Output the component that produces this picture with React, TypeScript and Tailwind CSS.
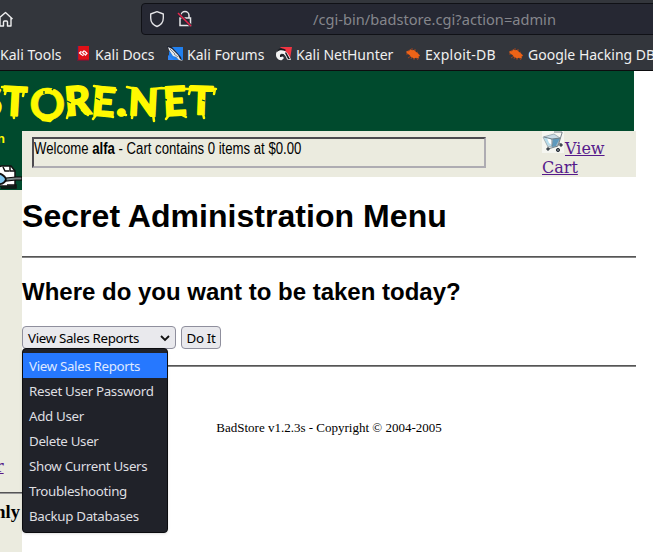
import React from 'react';

const ui = "font-['Noto_Sans',sans-serif]";

function Beetle() {
  return (
    <svg width="16" height="16" viewBox="0 0 16 16" className="shrink-0" fill="none" stroke="#b64416" strokeWidth=".8">
      <path d="M3 4l2 3M1 8h4M3 12l3-2M6 13l1-3M9 14v-3M13 14l-2-3M7 2v3M10 3v3M13 6l-2 1M15 9l-3 1" />
      <path d="M1.500 5 4 5.300 5 3.300l2 1 2-.3 2 2 2.200 1.500L15 10l-1.500.5.5 2-3-.7-2 .7-3-1.800-2-2.200L1.500 7z" fill="#ee6317" stroke="none" />
    </svg>
  );
}

function DocsIcon() {
  return (
    <svg width="14" height="16" viewBox="0 0 14 16" className="shrink-0">
      <path d="M1 0h12v14H1z" fill="#df1017" />
      <path d="M1 0h1.200v15H1z" fill="#342f60" />
      <path d="M1 13.700h12V15H1z" fill="#6b1d35" />
      <path d="M5.400 5.300 3.500 7l2.500 2M8.700 5.200 11 7.200 9 9.500M8.500 4.500 6.300 6.500l2 1.500-2 1.700" fill="none" stroke="#fff" strokeWidth="1.200" />
    </svg>
  );
}

function ForumsIcon() {
  return (
    <svg width="17" height="16" viewBox="0 0 17 16" className="shrink-0">
      <path d="M2 1h14v13H2z" fill="#2080ef" />
      <path d="M0 0h4l10 11 1 4-4-2L2 5z" fill="#202634" />
      <path d="m1 1 4 2 6 6 2 4 3 2-4-1-3-3-3-1L2 4z" fill="#e6e9ec" />
      <path d="m3 3 5 5M7 8l4 3" stroke="#627080" strokeWidth=".8" />
      <path d="M1 9v5h6z" fill="#3385f5" />
    </svg>
  );
}

function HunterIcon() {
  return (
    <svg width="16" height="16" viewBox="0 0 16 16" className="shrink-0">
      <path d="M4 1h12l-2 12-6-8z" fill="#f23442" />
      <path d="M0 9c0-6 6-7 9-4 3 2 5 6 6 9l-4-.5C10 10 8 7 5 8c-2 1-1 3 1 2l2 2-2 2C3 15 0 12 0 9z" fill="#f3f3f3" />
      <path d="M1 5c2-4 6-3 9-1L9 5C6 4 3 4 1 6zM10 6l4 7h-2L9 7zM4 9l4-1-1 2-2 1H4z" fill="#181b20" />
    </svg>
  );
}

function Logo() {
  return (
    <svg width="222" height="60" viewBox="0 0 222 60" className="block">
      <g fill="#fff900" stroke="#fff900" strokeLinejoin="round" fontFamily="Lato, sans-serif" fontWeight="900">
        <text strokeWidth="1.700" fontSize="40">
          <tspan x="-20" y="45">S</tspan>
          <tspan x="2" y="44" rotate="3">T</tspan>
          <tspan x="29.500" y="48.500" fontSize="44" strokeWidth=".5">O</tspan>
          <tspan x="66" y="45" rotate="-5" fontSize="40">R</tspan>
          <tspan x="91" y="44" rotate="5" fontSize="40">E</tspan>
          <tspan x="116" y="45" fontSize="44">.</tspan>
          <tspan x="128" y="44" rotate="3" fontSize="38">N</tspan>
          <tspan x="164" y="45" rotate="-3" fontSize="40">E</tspan>
          <tspan x="189" y="43" rotate="2" fontSize="39">T</tspan>
        </text>
        <g fill="none" strokeWidth="2.500" strokeLinecap="round">
          <path d="M2 16l24 2M6 19l-1 4M24 20l-1 5M13 40l1 7M37 43l6 6 7 1 4-4M69 40l-2 7M82 39l6 5M96 44l-3 4M109 43l4 3M122 43l4 1M133 40l-1 7M152 36l2 14M169 44l-3 4M182 44l4 2M202 38l2 9M190 19l-1 4M215 18l-1 5M94 15l22 4M162 17l27 1M190 16l26 2M127 16l9 2M153 18l9-1" />
        </g>
      </g>
      <path d="M32 14l3 3M55 15l-3 4M67 30l4 2M96 27l4 2M163 28l4 1M202 29l3 1M44 20v3M109 36l1 2" fill="none" stroke="#004a2d" strokeWidth="1.300" />
    </svg>
  );
}

function CartIcon() {
  return (
    <svg width="23" height="22" viewBox="0 0 23 22">
      <path d="M0 0h22v22H0z" fill="#f5f6f1" />
      <path d="m1 6 11-3 6 4-3 8-9 1z" fill="#c9dce6" stroke="#8798a1" strokeWidth=".7" />
      <path d="m2 7 8 1v7l-4-1z" fill="#b5ddec" />
      <path d="m11 8 7-1-4 8-4 1z" fill="#5e9abd" />
      <path d="m5 7 5 2v5l-3-2z" fill="#fff" />
      <path d="M2 6l8 2 8-1M10 8v7M12 1h8v1l-4 13-10 3M17 12l3 2" fill="none" stroke="#66757e" strokeWidth=".9" />
      <g fill="#6d767d" stroke="#293139">
        <circle cx="6" cy="18" r="1.200" /><circle cx="16" cy="19" r="1.600" /><circle cx="19" cy="14" r="1.200" />
      </g>
    </svg>
  );
}

const options = ['View Sales Reports', 'Reset User Password', 'Add User', 'Delete User', 'Show Current Users', 'Troubleshooting', 'Backup Databases'];

export default function App() {
  return (
    <div className="h-[552px] w-[653px] overflow-hidden bg-white text-black">
      <div className={`${ui} h-[71px] border-b border-[#0c0d0f] bg-[#33363c]`}>
        <div className="flex h-10 items-start pt-[3px]">
          <svg width="14" height="18" viewBox="0 0 14 18" className="mt-[7px] shrink-0" fill="none" stroke="#eeeeef" strokeWidth="1.400" strokeLinejoin="round">
            <path d="M-2 9 5.500 2.500 12.500 9M0 8v8h3.500v-4q0-1 1-1h2q1 0 1 1v4H11V8" />
          </svg>
          <div className="ml-[127px] flex h-8 w-[520px] shrink-0 items-center rounded-[4px] border border-[#101116] bg-[#262833]">
            <svg width="16" height="18" viewBox="0 0 16 18" className="ml-[7px] shrink-0" fill="none" stroke="#e5e5e8" strokeWidth="1.350" strokeLinejoin="round">
              <path d="M8 1.700 14.300 4v4c0 4-2.500 7-6.300 8.500C4.200 15 1.700 12 1.700 8V4z" />
            </svg>
            <svg width="16" height="18" viewBox="0 0 16 18" className="ml-3 shrink-0" fill="none" stroke="#e5e5e8" strokeWidth="1.500">
              <path d="M4 8V5.500a4 4 0 0 1 8 0V8M3 8h10.500v7.500H3z" />
              <path d="m1 3 13 13" stroke="#262833" strokeWidth="3" />
              <path d="m1 3 13 13" stroke="#e8244c" />
            </svg>
            <div className="ml-[120px] whitespace-pre pt-px text-[14.6px] tracking-[.02px] text-[#85868c]">/cgi-bin/badstore.cgi?action=admin</div>
          </div>
        </div>
        <div className="flex h-[28px] items-center whitespace-nowrap text-[14px] text-[#f0f0f0]">
          <span className="w-[76px] shrink-0">Kali Tools</span>
          <span className="flex w-[91px] shrink-0 items-center gap-[5px]"><DocsIcon />Kali Docs</span>
          <span className="flex w-[109px] shrink-0 items-center gap-[3px]"><ForumsIcon />Kali Forums</span>
          <span className="flex w-[129px] shrink-0 items-center gap-1"><HunterIcon />Kali NetHunter</span>
          <span className="flex w-[103px] shrink-0 items-center gap-1"><Beetle /><span className="tracking-[.25px]">Exploit-DB</span></span>
          <span className="flex shrink-0 items-center gap-1"><Beetle />Google Hacking DB</span>
        </div>
      </div>

      <header className="h-[60px] w-[634px] bg-[#004a2d]"><Logo /></header>

      <div className="flex">
        <aside className="flex h-[421px] w-[22px] shrink-0 flex-col overflow-hidden bg-[#ebebdf]">
          <div className="h-[59px] shrink-0 bg-[#004a2d]">
            <div className="h-[34px] font-['Liberation_Sans',sans-serif] text-[13px] font-bold leading-4 text-[#fff900]"><span className="-ml-[3px]">n</span></div>
            <svg width="22" height="25" viewBox="0 0 22 25">
              <path d="M-1 2 1 1h10l4 5v15H-1z" fill="#fff" stroke="#111" strokeWidth="1.500" />
              <path d="M3 2l2 4h4M10 1v5h5M7 20h9v3H1" fill="none" stroke="#111" strokeWidth="1.500" />
              <path d="M-5 8c6 0 10 3 11 6-1 4-5 6-11 5z" fill="#80c8f0" stroke="#111" strokeWidth="1.800" />
              <path d="m6 13 10-1h6v3h-6l-10 1z" fill="#788585" stroke="#080808" strokeWidth="1.200" />
            </svg>
          </div>
          <div className="mt-[267px] font-['DejaVu_Serif',serif] text-[16px] leading-5 text-[#551a8b] underline"><span className="-ml-[4px]">r</span></div>
          <div className="mt-[15px] h-[2px] shrink-0 border-t border-[#555] bg-[#999]" />
          <div className="mt-[8px] flex justify-end whitespace-nowrap pr-[2px] font-['Liberation_Serif',serif] text-[18.5px] font-bold leading-5">Only</div>
        </aside>

        <main className="w-[614px] font-['Liberation_Sans',sans-serif]">
          <div className="flex h-[46px] items-start bg-[#ebebdf]">
            <div className="ml-[10px] mt-[6px] h-[31px] w-[454px] border-2 border-b-[#aeacb2] border-l-[#4d4b50] border-r-[#aeacb2] border-t-[#4d4b50] text-[16px] leading-[19px]">
              <div className="origin-left scale-x-[.822] whitespace-nowrap">Welcome <b>alfa</b> - Cart contains 0 items at $0.00</div>
            </div>
            <a className="ml-[56px] w-[80px] font-['DejaVu_Serif',serif] text-[16px] leading-[19px] text-[#551a8b]">
              <span className="flex h-[27px] items-start"><CartIcon /><span className="mt-[8px] underline">View</span></span>
              <span className="block underline">Cart</span>
            </a>
          </div>
          <h1 className="mt-[20px] whitespace-nowrap text-[32px] font-bold leading-[38px] tracking-[.04px]">Secret Administration Menu</h1>
          <hr className="mt-[21px] h-[2px] border-0 border-t border-[#555] bg-[#858585]" />
          <h2 className="mt-[20px] whitespace-nowrap text-[24px] font-bold leading-[28px]">Where do you want to be taken today?</h2>
          <div className={`${ui} mt-5 flex h-[23px] gap-[5px] text-[13.333px] tracking-[-.33px]`}>
            <div className="relative h-[23px] w-[154px]">
              <div className="flex h-full items-center justify-between rounded-[4px] border border-[#8f8f9d] bg-[#e9e9ed] pl-[5px] pr-[5px] pt-[2px]">
                <span>View Sales Reports</span>
                <svg width="10" height="8" viewBox="0 0 10 8" className="mb-px" fill="none" stroke="#111" strokeWidth="1.800"><path d="m1 2 4 4 4-4" /></svg>
              </div>
              <div className="absolute left-0 top-[22px] h-[185px] w-[146px] rounded-[4px] border border-[#0b0c0f] bg-[#202229] pt-1 text-[#dedee0] shadow-sm">
                {options.map((option, i) => (
                  <div key={option} className={i === 0 ? 'h-[25px] whitespace-nowrap bg-[#2678ff] pl-[6px] pt-px leading-[25px] text-[#dfe8ff]' : 'h-[25px] whitespace-nowrap pl-[6px] pt-px leading-[25px]'}>{option}</div>
                ))}
              </div>
            </div>
            <button className="flex h-[23px] w-[40px] items-center justify-center whitespace-nowrap rounded-[4px] border border-[#8f8f9d] bg-[#e9e9ed] pt-[2px]">Do It</button>
          </div>
          <hr className="mt-4 h-[2px] border-0 border-t border-[#555] bg-[#858585]" />
          <p className="mt-[53px] text-center font-['Liberation_Serif',serif] text-[13px] leading-4">BadStore v1.2.3s - Copyright © 2004-2005</p>
        </main>
      </div>
    </div>
  );
}
